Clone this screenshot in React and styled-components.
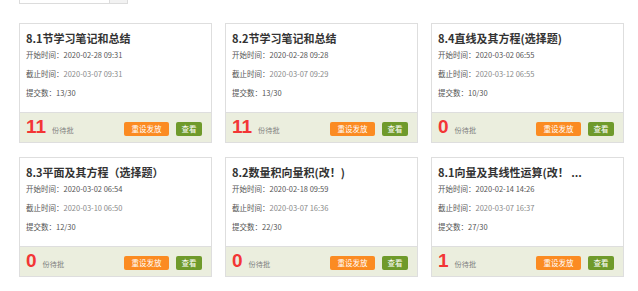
import styled, { createGlobalStyle } from "styled-components";

const GlobalStyle = createGlobalStyle`
  body {
    margin: 0;
    background: #fff;
    font-family: "Noto Sans CJK SC", "Liberation Sans", sans-serif;
  }
`;

const tasks = [
  { title: "8.1节学习笔记和总结", start: "2020-02-28 09:31", end: "2020-03-07 09:31", submit: "13/30", pending: 11 },
  { title: "8.2节学习笔记和总结", start: "2020-02-28 09:28", end: "2020-03-07 09:29", submit: "13/30", pending: 11 },
  { title: "8.4直线及其方程(选择题)", start: "2020-03-02 06:55", end: "2020-03-12 06:55", submit: "10/30", pending: 0 },
  { title: "8.3平面及其方程（选择题）", start: "2020-03-02 06:54", end: "2020-03-10 06:50", submit: "12/30", pending: 0 },
  { title: "8.2数量积向量积(改！)", start: "2020-02-18 09:59", end: "2020-03-07 16:36", submit: "22/30", pending: 0 },
  { title: "8.1向量及其线性运算(改！ ...", start: "2020-02-14 14:26", end: "2020-03-07 16:37", submit: "27/30", pending: 1 },
];

const Page = styled.div`
  padding: 0 0 0 19px;
  width: 638px;
  height: 291px;
  box-sizing: border-box;
  overflow: hidden;
`;

const SearchBar = styled.div`
  display: flex;
  margin-top: -20px;
  height: 24px;
  width: 109px;
`;

const SearchInput = styled.div`
  flex: 1;
  border: 1px solid #dcdcdc;
  background: #fff;
`;

const SearchButton = styled.div`
  width: 17px;
  border: 1px solid #dcdcdc;
  border-left: none;
  background: #f2f2f2;
`;

const Grid = styled.div`
  display: grid;
  grid-template-columns: repeat(3, 193px);
  grid-auto-rows: 120px;
  column-gap: 13px;
  row-gap: 14px;
  margin-top: 19px;
`;

const Card = styled.div`
  display: flex;
  flex-direction: column;
  border: 1px solid #dedede;
  background: #fff;
  box-sizing: border-box;
`;

const Body = styled.div`
  height: 88px;
  box-sizing: border-box;
  padding: 7px 6px 0;
`;

const Title = styled.div`
  font-size: 11px;
  line-height: 14px;
  font-weight: bold;
  color: #333;
  white-space: pre;
`;

const Line = styled.div`
  font-size: 7.5px;
  line-height: 19px;
  color: #555;
  white-space: nowrap;
`;

const Value = styled.span`
  color: ${(p) => (p.$muted ? "#8a8a8a" : "#555")};
`;

const Footer = styled.div`
  flex: 1;
  display: flex;
  align-items: center;
  padding: 0 9px 0 6px;
  border-top: 1px solid #dedede;
  background: #ebeede;
`;

const Pending = styled.div`
  display: flex;
  align-items: baseline;
  gap: 6px;
  margin-top: -1px;
`;

const Count = styled.span`
  font-family: "Liberation Sans", Arial, sans-serif;
  font-size: 19px;
  font-weight: bold;
  line-height: 20px;
  color: #f33535;
`;

const CountLabel = styled.span`
  font-size: 7.2px;
  color: #808080;
`;

const Actions = styled.div`
  margin-left: auto;
  display: flex;
  gap: 7px;
  margin-top: 2px;
`;

const Button = styled.div`
  height: 14px;
  padding: 0 ${(p) => (p.$wide ? "7.5px" : "5.5px")};
  border-radius: 2px;
  background: ${(p) => (p.$tone === "green" ? "#6f9a2b" : "#fb8b22")};
  color: #fff;
  font-size: 7.5px;
  line-height: 14px;
  white-space: nowrap;
`;

function TaskCard({ task }) {
  return (
    <Card>
      <Body>
        <Title>{task.title}</Title>
        <Line>开始时间：<Value>{task.start}</Value></Line>
        <Line>截止时间：<Value $muted>{task.end}</Value></Line>
        <Line>提交数：<Value>{task.submit}</Value></Line>
      </Body>
      <Footer>
        <Pending>
          <Count>{task.pending}</Count>
          <CountLabel>份待批</CountLabel>
        </Pending>
        <Actions>
          <Button $wide>重设发放</Button>
          <Button $tone="green">查看</Button>
        </Actions>
      </Footer>
    </Card>
  );
}

export default function App() {
  return (
    <Page>
      <GlobalStyle />
      <SearchBar>
        <SearchInput />
        <SearchButton />
      </SearchBar>
      <Grid>
        {tasks.map((t) => (
          <TaskCard key={t.title} task={t} />
        ))}
      </Grid>
    </Page>
  );
}
